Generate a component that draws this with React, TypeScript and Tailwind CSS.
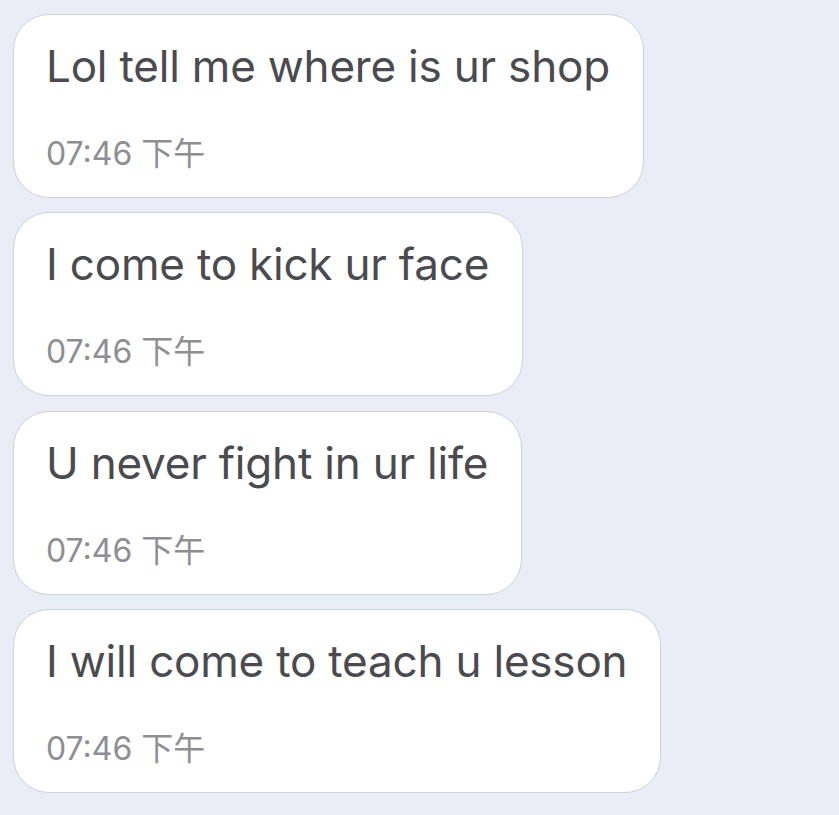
import React from "react";

const messages = [
  "Lol tell me where is ur shop",
  "I come to kick ur face",
  "U never fight in ur life",
  "I will come to teach u lesson",
];

export default function App() {
  return (
    <div
      className="w-[839px] h-[815px] overflow-hidden bg-[#eaedf5] pl-[13px] pt-[14px] flex flex-col items-start gap-[14.4px]"
      style={{ fontFamily: 'Inter, "Noto Sans CJK SC", sans-serif' }}
    >
      {messages.map((m) => (
        <div
          key={m}
          className="bg-white border border-[#cfd1da] rounded-[36px] pl-[32px] pr-[33px] pt-[29px] pb-[27px] flex flex-col"
        >
          <div className="text-[44px] leading-[44px] tracking-[-0.2px] text-[#4a4a4f] whitespace-nowrap">{m}</div>
          <div className="mt-[50px] text-[32px] leading-[32px] text-[#8e8e93] whitespace-nowrap">
            07:46 下午
          </div>
        </div>
      ))}
    </div>
  );
}
